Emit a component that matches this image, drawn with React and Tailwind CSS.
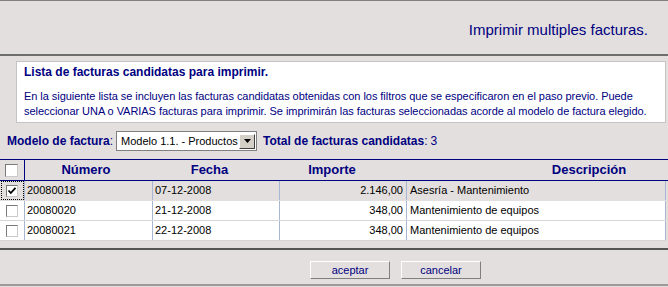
import React from 'react';

const rows = [
  { num: '20080018', fecha: '07-12-2008', importe: '2.146,00', desc: 'Asesría - Mantenimiento', checked: true },
  { num: '20080020', fecha: '21-12-2008', importe: '348,00', desc: 'Mantenimiento de equipos' },
  { num: '20080021', fecha: '22-12-2008', importe: '348,00', desc: 'Mantenimiento de equipos' },
];

const Check = ({ checked, size = 'w-[12px] h-[12px]' }) => (
  <span className={`${size} bg-white border border-t-[#7a7a7a] border-l-[#7a7a7a] border-b-[#c9c9c9] border-r-[#c9c9c9] flex items-center justify-center`}>
    {checked && (
      <svg width="10" height="10" viewBox="0 0 10 10">
        <path d="M1.5 4.5 L3.8 7 L8.5 1.8" fill="none" stroke="#000" strokeWidth="1.8" />
      </svg>
    )}
  </span>
);

const Button = ({ children }) => (
  <button className="w-[80px] h-[18px] bg-[#e3dfde] border border-t-white border-l-white border-b-[#7f7f7f] border-r-[#7f7f7f] text-[11px] leading-[15px] text-[#000080]">
    {children}
  </button>
);

export default function App() {
  return (
    <div className="w-[668px] h-[287px] overflow-hidden bg-[#e3dfde] border-t border-[#808080] flex flex-col font-['Liberation_Sans',Arial,sans-serif] text-[#000080]">
      {/* Header */}
      <div className="h-[53px] flex justify-end pt-[20px] pr-[20px]">
        <h1 className="text-[15px] leading-[17px]">Imprimir multiples facturas.</h1>
      </div>
      <div className="border-t-2 border-[#6e6e6e]" />

      {/* Info box */}
      <div className="mt-[5px] ml-[16px] mr-[2px] bg-white border border-[#c4c4c4] pl-[7px] pt-[3px] pb-[3px]">
        <p className="text-[12px] leading-[14px] font-bold">Lista de facturas candidatas para imprimir.</p>
        <p className="mt-[10px] text-[11px] leading-[15px] whitespace-nowrap tracking-[-0.05px]">
          En la siguiente lista se incluyen las facturas candidatas obtenidas con los filtros que se especificaron en el paso previo. Puede
          <br />
          seleccionar UNA o VARIAS facturas para imprimir. Se imprimirán las facturas seleccionadas acorde al modelo de factura elegido.
        </p>
      </div>

      {/* Model selection */}
      <div className="mt-[8px] h-[20px] flex items-center text-[12px]">
        <span className="w-[116px] pl-[7px] font-bold">Modelo de factura<span className="font-normal">:</span></span>
        <div className="w-[141px] h-[20px] bg-white border border-[#7f7f7f] flex items-center justify-between pl-[4px] pr-[1px] text-black text-[11px] whitespace-nowrap">
          <span>Modelo 1.1. - Productos</span>
          <span className="w-[16px] h-[15px] bg-[#d4d0c8] border border-t-white border-l-white border-b-[#404040] border-r-[#404040] flex items-center justify-center">
            <svg width="7" height="4" viewBox="0 0 7 4"><path d="M0 0 H7 L3.5 4 Z" fill="#000" /></svg>
          </span>
        </div>
        <span className="ml-[6px] font-bold">Total de facturas candidatas<span className="font-normal">:</span></span>
        <span className="ml-[3px]">3</span>
      </div>

      {/* Table */}
      <div className="mt-[8px] border-t border-[#000080]">
        <div className="h-[21px] grid grid-cols-[25px_122px_125px_120px_120px_154px] border-b border-[#000080] text-[13px] font-bold items-center">
          <div className="h-full border-r border-[#000080] flex items-center justify-center pr-[1px]">
            <Check size="w-[13px] h-[13px]" />
          </div>
          <div className="text-center">Número</div>
          <div className="text-center">Fecha</div>
          <div className="text-center">Importe</div>
          <div />
          <div className="text-center">Descripción</div>
        </div>
        {rows.map((r) => (
          <div
            key={r.num}
            className={`h-[20px] w-[666px] grid grid-cols-[25px_128px_127px_127px_259px] border-b ${r.checked ? 'bg-[#e3dfde] border-[#e3dfde]' : 'bg-white border-[#d6d6d6]'} text-[11px] leading-[19px] text-black`}
          >
            <div className="border-r border-[#a9b6d3] flex items-center justify-center">
              <span className={`w-[23px] h-[19px] flex items-center justify-center ${r.checked ? 'border border-dotted border-black' : ''}`}>
                <Check checked={r.checked} />
              </span>
            </div>
            <div className="border-r border-[#a9b6d3] pl-[2px]">{r.num}</div>
            <div className="border-r border-[#a9b6d3] pl-[2px]">{r.fecha}</div>
            <div className="border-r border-[#a9b6d3] pr-[3px] text-right">{r.importe}</div>
            <div className="border-r border-[#a9b6d3] pl-[3px]">{r.desc}</div>
          </div>
        ))}
      </div>

      {/* Footer */}
      <div className="mt-[7px] border-t-2 border-[#555555]" />
      <div className="mt-[11px] pl-[310px] flex gap-[11px]">
        <Button>aceptar</Button>
        <Button>cancelar</Button>
      </div>
      <div className="mt-[5px] border-t-2 border-[#9a9a9a]" />
    </div>
  );
}
